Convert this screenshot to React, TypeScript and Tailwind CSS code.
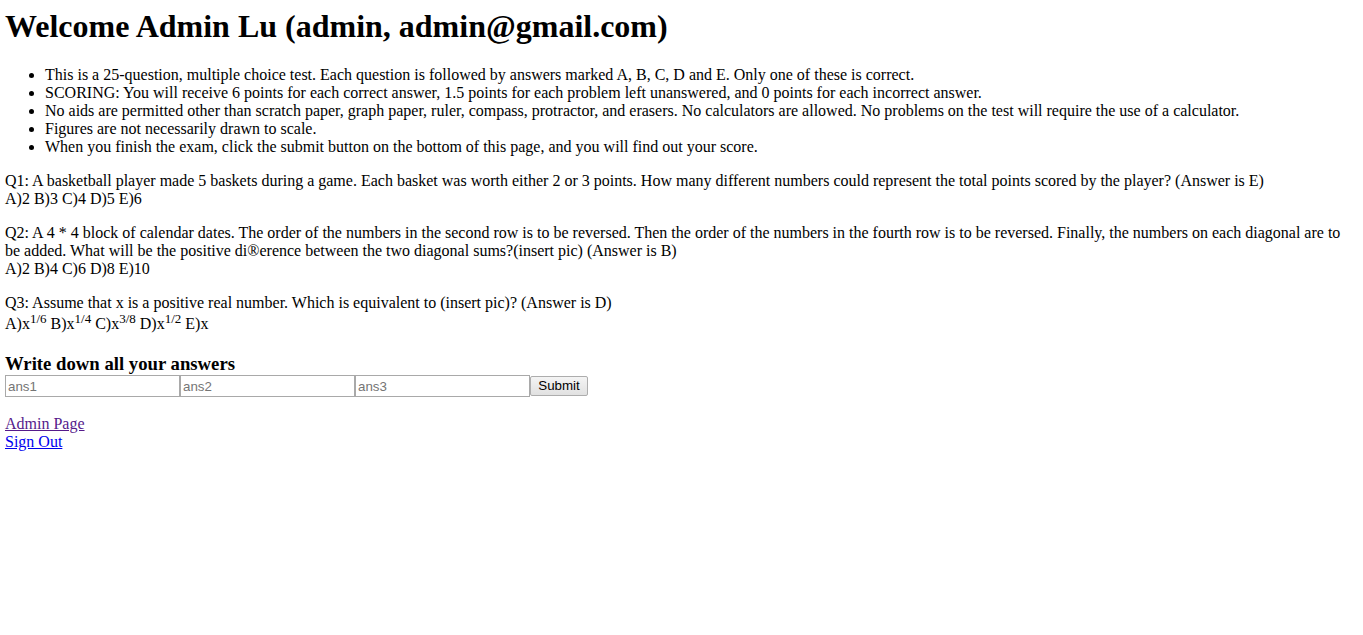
export default function App() {
  const rules = [
    "This is a 25-question, multiple choice test. Each question is followed by answers marked A, B, C, D and E. Only one of these is correct.",
    "SCORING: You will receive 6 points for each correct answer, 1.5 points for each problem left unanswered, and 0 points for each incorrect answer.",
    "No aids are permitted other than scratch paper, graph paper, ruler, compass, protractor, and erasers. No calculators are allowed. No problems on the test will require the use of a calculator.",
    "Figures are not necessarily drawn to scale.",
    "When you finish the exam, click the submit button on the bottom of this page, and you will find out your score.",
  ];

  const powers = [
    ["A)", "1/6"],
    ["B)", "1/4"],
    ["C)", "3/8"],
    ["D)", "1/2"],
  ];

  return (
    <div className="min-h-screen bg-white px-[5px] pt-[8px] font-['Liberation_Serif','Times_New_Roman',serif] text-[16px] leading-[18px] text-black">
      <h1 className="mb-[21px] text-[32px] font-bold leading-[37px]">
        Welcome Admin Lu (admin, admin@gmail.com)
      </h1>

      <ul className="mb-[16px] list-disc pl-[40px]">
        {rules.map((r, i) => (
          <li key={i}>{r}</li>
        ))}
      </ul>

      <p className="mb-[16px]">
        Q1: A basketball player made 5 baskets during a game. Each basket was worth either 2 or 3 points. How many different numbers could represent the total points scored by the player? (Answer is E)
        <br />
        A)2 B)3 C)4 D)5 E)6
      </p>

      <p className="mb-[16px]">
        Q2: A 4 * 4 block of calendar dates. The order of the numbers in the second row is to be reversed. Then the order of the numbers in the fourth row is to be reversed. Finally, the numbers on each diagonal are to be added. What will be the positive di®erence between the two diagonal sums?(insert pic) (Answer is B)
        <br />
        A)2 B)4 C)6 D)8 E)10
      </p>

      <p>
        Q3: Assume that x is a positive real number. Which is equivalent to (insert pic)? (Answer is D)
        <br />
        <span className="inline-block pt-[3px]">
          {powers.map(([l, p]) => (
            <span key={l}>
              {l}x<span className="relative top-[-6px] text-[13px]">{p}</span>{" "}
            </span>
          ))}
          E)x
        </span>
      </p>

      <h3 className="mt-[19px] text-[18.72px] font-bold leading-[22px]">
        Write down all your answers
      </h3>

      <form className="flex font-['Liberation_Sans',Arial,sans-serif] text-[13.33px]">
        {["ans1", "ans2", "ans3"].map((a) => (
          <input
            key={a}
            placeholder={a}
            className="h-[22px] w-[175px] border border-[#a9a9a9] bg-white px-[2px] text-black placeholder:text-[#757575]"
          />
        ))}
        <button
          type="button"
          className="mt-[1px] h-[20px] w-[58px] rounded-[2px] border border-[#adadad] bg-gradient-to-b from-[#f4f4f4] to-[#e1e1e1] text-black"
        >
          Submit
        </button>
      </form>

      <div className="mt-[18px] flex flex-col items-start">
        <a href="#" className="text-[#551a8b] underline">
          Admin Page
        </a>
        <a href="#" className="text-[#0000ee] underline">
          Sign Out
        </a>
      </div>
    </div>
  );
}
